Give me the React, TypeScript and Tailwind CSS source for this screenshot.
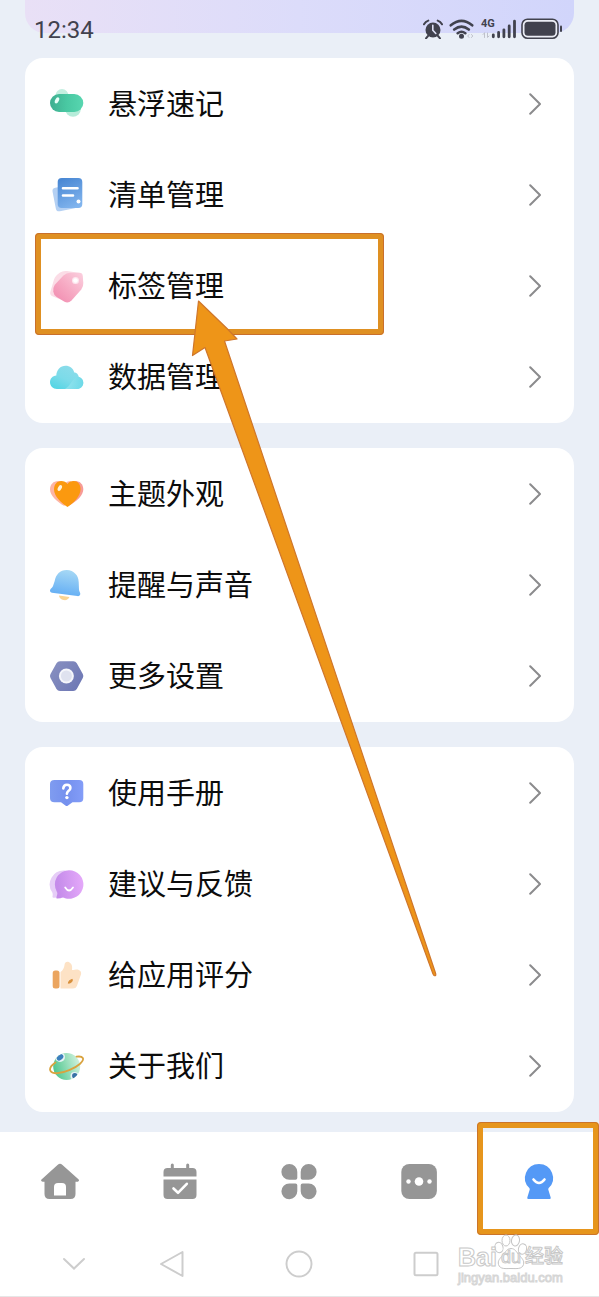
import type { ReactNode } from "react";

const FloatIcon = () => (
  <svg viewBox="0 0 36 36" className="size-9" aria-hidden="true">
    <defs>
      <linearGradient id="float" x1="0" y1="0" x2="1" y2="0">
        <stop offset="0" stopColor="#3fae90" />
        <stop offset="0.5" stopColor="#49c8a2" />
        <stop offset="1" stopColor="#58d6b0" />
      </linearGradient>
    </defs>
    <circle cx="14" cy="9.500" r="6.500" fill="#c4efe0" />
    <circle cx="25" cy="23" r="7.800" fill="#b5ecd9" />
    <rect x="2" y="8" width="33.300" height="18" rx="9" fill="url(#float)" />
    <ellipse cx="9" cy="14.300" rx="1.800" ry="3.300" fill="#e9fff8" transform="rotate(28 9 14.300)" />
  </svg>
);

const ListIcon = () => (
  <svg viewBox="0 0 36 36" className="size-9" aria-hidden="true">
    <defs>
      <linearGradient id="list" x1="0.3" y1="0" x2="0.7" y2="1">
        <stop offset="0" stopColor="#4a88d4" />
        <stop offset="1" stopColor="#82b5ee" />
      </linearGradient>
    </defs>
    <rect x="6" y="9" width="22" height="24" rx="3.500" fill="#b4d0f3" transform="rotate(-11 17 21)" />
    <rect x="9.700" y="1" width="24.600" height="30" rx="4" fill="url(#list)" />
    <path d="M15 11.300h14.500M15 18.500h10" stroke="#fff" strokeWidth="2.600" strokeLinecap="round" />
    <circle cx="30.500" cy="24.500" r="2" fill="#fff" />
  </svg>
);

const TagIcon = () => (
  <svg viewBox="0 0 36 36" className="size-9" aria-hidden="true">
    <defs>
      <linearGradient id="tag" x1="1" y1="0" x2="0.1" y2="0.9">
        <stop offset="0" stopColor="#fbd0df" />
        <stop offset="0.6" stopColor="#f6a8c2" />
        <stop offset="1" stopColor="#f28fb2" />
      </linearGradient>
    </defs>
    <path d="M12 4.500Q15 2.500 19 3L32 5 14 32 5 28.500Q1.500 27 2.300 24L6 11.500Q7 8 12 4.500Z" fill="#fbdce6" />
    <path d="M22 4.700H31.500Q34.500 4.700 34.800 8L35.300 15Q35.500 18.500 33.300 21.500L23.500 32.500Q20.500 35.500 16.500 33.800L8.700 29Q5.600 27 5.300 23.500 5 19.500 6.800 16.800L15.500 7.500Q18.500 4.700 22 4.700Z" fill="url(#tag)" />
    <circle cx="27.500" cy="12.500" r="3.500" fill="#fde6ee" />
    <circle cx="27.500" cy="12.500" r="2.300" fill="#fff" />
  </svg>
);

const CloudIcon = () => (
  <svg viewBox="0 0 36 36" className="size-9" aria-hidden="true">
    <defs>
      <linearGradient id="cloud" x1="0" y1="1" x2="0.7" y2="0">
        <stop offset="0" stopColor="#4cd4e3" />
        <stop offset="0.5" stopColor="#7cdbe9" />
        <stop offset="1" stopColor="#8cdcea" />
      </linearGradient>
      <linearGradient id="cloudLow" x1="0" y1="0.5" x2="1" y2="0.5">
        <stop offset="0" stopColor="#a9e9f2" />
        <stop offset="1" stopColor="#62d8e6" />
      </linearGradient>
    </defs>
    <path d="M9 30C5 30 2 27 2 23.300 2 19.700 4.500 17 8.300 16.600 8.500 10.800 12.500 6.700 17.500 6.700c4.300 0 7.600 2.400 8.800 6.700 2.300 0 4.200 2 4.400 4.400 2.900.8 4.600 3.200 4.600 5.900 0 3.600-2.800 6.300-6.600 6.300Z" fill="url(#cloud)" />
    <path d="M17 30C23 27 24 19 30.700 17.800c2.900.8 4.600 3.200 4.600 5.900 0 3.600-2.800 6.300-6.600 6.300Z" fill="url(#cloudLow)" opacity=".65" />
  </svg>
);

const HeartIcon = () => (
  <svg viewBox="0 0 36 36" className="size-9" aria-hidden="true">
    <path d="M16.500 30C9 26 2 19.500 2 13.500 2 8.500 5.500 5 10 5c3 0 5.500 1.300 7 3 1-1.700 3-3 6-3Z" fill="#fdb5a5" />
    <path d="M20 30C29 25.500 35.300 19 35.300 13.500 35.300 8.500 32 5 27.500 5c-3 0-5.500 1.300-7 3Z" fill="#f79b97" />
    <path d="M19.500 31C14 27.500 6 20.500 6 13.500 6 8.500 9 5 13.200 5c2.700 0 5.200 1.200 6.300 3 1.100-1.800 3.500-3 6.200-3 4 0 6.900 3.400 6.900 8 0 7.500-7.600 14.300-13.100 18Z" fill="#fb990f" />
    <ellipse cx="11.800" cy="12" rx="1.800" ry="3.200" fill="#fff3dc" transform="rotate(28 11.800 12)" />
  </svg>
);

const BellIcon = () => (
  <svg viewBox="0 0 36 36" className="size-9" aria-hidden="true">
    <defs>
      <linearGradient id="bell" x1="0.6" y1="0" x2="0.400" y2="1">
        <stop offset="0" stopColor="#a6d8f5" />
        <stop offset="1" stopColor="#62adf4" />
      </linearGradient>
    </defs>
    <path d="M11 28.500 21.500 30C20.500 32.500 18 33.500 15.500 33c-2.500-.5-4.200-2-4.500-4.500Z" fill="#f9d493" />
    <path d="M6.700 14C7.800 7.200 12.500 2.700 19 3c6.900.4 11.500 5.300 11.700 12l.3 7.500c.1 1.700 1.200 2.600 1.300 4.300 0 1.700-1.300 2.500-3 2.300L4 25.700c-1.800-.3-2.500-1.700-1.700-3.200.8-1.400 2.500-2.300 2.800-3.800Z" fill="url(#bell)" />
  </svg>
);

const NutIcon = () => (
  <svg viewBox="0 0 36 36" className="size-9" aria-hidden="true">
    <defs>
      <linearGradient id="nut" x1="0" y1="0.200" x2="1" y2="0.900">
        <stop offset="0" stopColor="#878fc0" />
        <stop offset="1" stopColor="#6c76b4" />
      </linearGradient>
    </defs>
    <path d="M12 3.300h13.300q2.300 0 3.500 2l6 10.700q1.100 2 0 4l-6 11q-1.200 2-3.500 2H12q-2.300 0-3.500-2L2.500 20q-1.100-2 0-4l6-10.700q1.200-2 3.500-2Z" fill="url(#nut)" />
    <circle cx="18.400" cy="18" r="7.500" fill="#f5f6fb" />
    <circle cx="18.400" cy="18" r="5.500" fill="#dfe2ef" />
  </svg>
);

const ManualIcon = () => (
  <svg viewBox="0 0 36 36" className="size-9" aria-hidden="true">
    <defs>
      <linearGradient id="manual" x1="0" y1="0" x2="1" y2="0">
        <stop offset="0" stopColor="#7f9cf0" />
        <stop offset="0.5" stopColor="#7590ee" />
        <stop offset="1" stopColor="#839df8" />
      </linearGradient>
    </defs>
    <path d="M6.500 5h24.800q4 0 4 4v14.300q0 4-4 4H24.500L20 30.500q-1.300 1-2.600 0L13 27.300H6.500q-4.500 0-4.500-4V9q0-4 4.500-4Z" fill="url(#manual)" />
    <path d="M15.300 13.400c.2-2.500 1.600-3.700 3.600-3.700 2.100 0 3.500 1.300 3.500 3.200 0 2.900-3.500 2.900-3.500 5.800" fill="none" stroke="#fff" strokeWidth="2.600" strokeLinecap="round" />
    <circle cx="18.900" cy="22.600" r="1.700" fill="#fff" />
  </svg>
);

const FeedbackIcon = () => (
  <svg viewBox="0 0 36 36" className="size-9" aria-hidden="true">
    <defs>
      <linearGradient id="feedback" x1="0.100" y1="0.500" x2="1" y2="0.400">
        <stop offset="0" stopColor="#c58cea" />
        <stop offset="1" stopColor="#e5a9fa" />
      </linearGradient>
    </defs>
    <path d="M17 4.500A14 14 0 0 0 4.300 26.500Q5 28 4.500 30.500q-.2 1.300 1.200 1.200L18 31Z" fill="#e6cdf7" />
    <path d="M21 4.200A14.300 14.300 0 1 1 17 32.200Q15 31 12.500 32.300L9.500 32.500Q8 32.500 8.500 31L9.300 28Q9.500 27 8.700 25.500A14.300 14.300 0 0 1 21 4.200Z" fill="url(#feedback)" />
    <path d="M17.200 21.500Q21 27.500 25 21.500" fill="none" stroke="#fff" strokeWidth="1.800" strokeLinecap="round" />
  </svg>
);

const ThumbIcon = () => (
  <svg viewBox="0 0 36 36" className="size-9" aria-hidden="true">
    <rect x="4.700" y="13.500" width="6.800" height="18" rx="2.500" fill="#eba55f" />
    <path d="M12.500 15Q16 12.500 16.500 8C16.700 5 19 4.200 20.800 5 24 6.500 24.500 9.500 24 13h1.500C27 12 31.500 12 32.700 14.500c.8 1.500.4 3-.3 4.500l-3.500 10q-1 2.500-4 2.500H12.500Z" fill="#fde2c5" />
    <path d="M20.300 26.200q.4-3.400 4-3.800.3 3.400-4 3.800Z" fill="#d98f3a" stroke="#d98f3a" strokeLinejoin="round" />
  </svg>
);

const PlanetIcon = () => (
  <svg viewBox="0 0 36 36" className="size-9" aria-hidden="true">
    <defs>
      <linearGradient id="planet" x1="0" y1="0.600" x2="1" y2="0.300">
        <stop offset="0" stopColor="#4ec68e" />
        <stop offset="1" stopColor="#d3f3df" />
      </linearGradient>
      <clipPath id="globe">
        <circle cx="18.700" cy="18.500" r="13.500" />
      </clipPath>
    </defs>
    <circle cx="18.700" cy="18.500" r="13.500" fill="url(#planet)" />
    <g clipPath="url(#globe)">
      <circle cx="12" cy="9" r="5" fill="#e8f3f5" />
      <ellipse cx="12" cy="9.300" rx="3.700" ry="2.700" fill="#3c80bd" transform="rotate(-40 12 9.300)" />
      <circle cx="26.500" cy="28" r="4" fill="#e8f3f5" />
      <circle cx="26.800" cy="27.800" r="2.700" fill="#3872a6" />
    </g>
    <path d="M7.500 14.500C3 17.500 1.200 21 2.700 23.300c2 3 10 2.500 18.500-1.100S36.500 13.200 34.800 10c-.8-1.400-3-1.800-6.300-1.300" fill="none" stroke="#d9a33f" strokeWidth="1.800" strokeLinecap="round" />
  </svg>
);

type Item = { label: string; icon: () => ReactNode; marked?: boolean };

const groups: Item[][] = [
  [
    { label: "悬浮速记", icon: FloatIcon },
    { label: "清单管理", icon: ListIcon },
    { label: "标签管理", icon: TagIcon, marked: true },
    { label: "数据管理", icon: CloudIcon },
  ],
  [
    { label: "主题外观", icon: HeartIcon },
    { label: "提醒与声音", icon: BellIcon },
    { label: "更多设置", icon: NutIcon },
  ],
  [
    { label: "使用手册", icon: ManualIcon },
    { label: "建议与反馈", icon: FeedbackIcon },
    { label: "给应用评分", icon: ThumbIcon },
    { label: "关于我们", icon: PlanetIcon },
  ],
];

const Row = ({ label, icon: Icon, marked }: Item) => (
  <li className="relative">
    <button type="button" className="flex h-[91px] w-full items-center pr-[33px] pl-[23px] text-left">
      <Icon />
      <span className="ml-6 flex-1 pb-[3px] text-[29px] leading-10 text-[#0c0c0c]">{label}</span>
      <svg viewBox="0 0 12 22" className="h-[22px] w-3" fill="none" stroke="#8b8b8d" strokeWidth="2" strokeLinecap="round" strokeLinejoin="round" aria-hidden="true">
        <path d="M1.200 1.200 11 11 1.200 20.800" />
      </svg>
    </button>
    {marked && (
      <span className="pointer-events-none absolute -top-[7px] left-[10px] h-[102px] w-[349px] rounded-[4px] border-6 border-[#df9022] outline -outline-offset-1 outline-[#c96f2c]" />
    )}
  </li>
);

const StatusBar = () => (
  <header className="relative flex h-[58px] items-start justify-between pt-[17px] pr-9 pl-[34px] text-[#41424e]">
    <div className="absolute inset-x-[25px] top-0 h-[33px] rounded-b-[20px] bg-linear-to-r from-[#e9e0f6] via-[#dcdcfa] to-[#d1d5fb]" />
    <time className="relative font-[Roboto,sans-serif] text-2xl leading-[26px]">12:34</time>
    <div className="relative flex items-center pt-px">
      <svg viewBox="0 0 20 20" className="size-5" fill="none" stroke="currentColor" aria-label="Alarm">
        <circle cx="10" cy="11" r="7.500" fill="currentColor" stroke="none" />
        <path d="M1 5.300Q2.500 2.500 5.300 1.600M19 5.300Q17.500 2.500 14.700 1.600M5 17 3 19.300M15 17l2 2.300" strokeWidth="2" strokeLinecap="round" />
        <path d="M9.800 6.300v5l3 3.200" stroke="#dfe1f6" strokeWidth="1.600" strokeLinecap="round" />
      </svg>
      <svg viewBox="0 0 26 20" className="ml-1.5 h-5 w-[26px]" fill="none" stroke="currentColor" strokeWidth="2.600" strokeLinecap="round" aria-label="Wi-Fi">
        <path d="M1.800 6.300Q12.500-2.500 23.200 6.300M5.200 10.500Q12.500 4.700 19.800 10.500M8.700 14.200Q12.500 11.300 16.300 14.200" />
        <circle cx="12.500" cy="17.300" r="1.200" fill="currentColor" />
        <path d="m20 15.500-1.300 1.500 1.300 1.500M22.500 15.500l1.300 1.500-1.300 1.500" stroke="#bfc1cb" strokeWidth="1" />
      </svg>
      <div className="relative ml-1.5 h-5 w-9">
        <span className="absolute -top-px left-0 font-[Roboto,sans-serif] text-[11px] leading-3 font-bold">4G</span>
        <svg viewBox="0 0 36 20" className="h-5 w-9" fill="none" stroke="currentColor" strokeWidth="2.800" strokeLinecap="round" aria-label="Signal">
          <path d="M12.300 17.800v-2M17.600 17.800v-4.300M22.900 17.800v-7M28.200 17.800V7M33.500 17.800V2.200" />
          <path d="M3.500 14v4.500M2 15.500 3.500 14M6.500 14v4.500L8 17" stroke="#bfc1cb" strokeWidth="1" />
        </svg>
      </div>
      <svg viewBox="0 0 42 22" className="ml-1 h-[22px] w-[42px]" aria-label="Battery">
        <rect x="1" y="1.200" width="36" height="19" rx="5.500" fill="#eceef6" stroke="currentColor" strokeWidth="1.600" />
        <rect x="3.500" y="3.700" width="31" height="14" rx="3.500" fill="currentColor" />
        <path d="M40 8.500v4.500" stroke="currentColor" strokeWidth="2" strokeLinecap="round" />
      </svg>
    </div>
  </header>
);

const tabs = [
  {
    name: "Home",
    art: (
      <>
        <path fill="#969696" d="M17.800 2.700q2.200-2 4.400 0L38.700 17.500q.8 1-.2 1.800-.6.500-1.500.5h-1.500V32q0 5-5 5h-21q-5 0-5-5V19.800H3q-1.300 0-1.800-1-.4-.7.3-1.300Z" />
        <path fill="#fff" d="M18 21h4q4 0 4 4v8.500H14V25q0-4 4-4Z" />
      </>
    ),
  },
  {
    name: "Calendar",
    art: (
      <>
        <path d="M12.300 3v5M27.700 3v5" stroke="#969696" strokeWidth="3" strokeLinecap="round" />
        <path fill="#969696" d="M7.500 6h25q4 0 4 4v4.500h-33V10q0-4 4-4ZM3.500 17.500h33V33q0 4-4 4h-25q-4 0-4-4Z" />
        <path d="m13.500 26.500 4.500 4.300 8.800-9" fill="none" stroke="#fff" strokeWidth="2.600" strokeLinecap="round" strokeLinejoin="round" />
      </>
    ),
  },
  {
    name: "Widgets",
    art: (
      <path fill="#969696" d="M10.300 2A8 8 0 0 1 18.300 10v6q0 1.800-1.800 1.800h-6.200a7.900 7.900 0 0 1 0-15.800ZM29.700 2a7.900 7.900 0 0 1 0 15.800h-6.200q-1.800 0-1.800-1.800v-6a8 8 0 0 1 8-8ZM10.300 37.200a7.900 7.900 0 0 1 0-15.800h6.200q1.800 0 1.800 1.800v6a8 8 0 0 1-8 8ZM29.700 37.200a8 8 0 0 1-8-8v-6q0-1.800 1.800-1.800h6.200a7.900 7.900 0 0 1 0 15.800Z" />
    ),
  },
  {
    name: "More",
    art: (
      <>
        <rect x="2.300" y="2" width="35.600" height="35" rx="8" fill="#969696" />
        <circle cx="20" cy="19.500" r="4.300" fill="#fff" />
        <circle cx="9.500" cy="19.500" r="2.200" fill="#fff" />
        <circle cx="30.500" cy="19.500" r="2.200" fill="#fff" />
      </>
    ),
  },
  {
    name: "Me",
    art: (
      <>
        <path fill="#5499f6" d="M20 2a14 14 0 0 1 9.700 24.100q-.8.900-.3 2l2.300 7.400q.4 1.500-1.200 1.500h-21q-1.600 0-1.200-1.500l2.300-7.400q.5-1.100-.3-2A14 14 0 0 1 20 2Z" />
        <path d="M14.500 17.500q5.500 7 11 0" fill="none" stroke="#fff" strokeWidth="2.600" strokeLinecap="round" />
      </>
    ),
  },
];

const TabBar = () => (
  <nav className="grid h-[100px] grid-cols-5 bg-white">
    {tabs.map((tab, i) => (
      <div key={tab.name} className="relative flex">
        <button type="button" aria-label={tab.name} className="flex flex-1 items-center justify-center">
          <svg viewBox="0 0 40 40" className="size-10" aria-hidden="true">{tab.art}</svg>
        </button>
        {i === 4 && (
          <span className="pointer-events-none absolute -top-[10px] right-0 -left-[2px] h-[113px] rounded-[4px] border-6 border-[#e6951c] outline -outline-offset-1 outline-[#cb742b]" />
        )}
      </div>
    ))}
  </nav>
);

const SystemBar = () => (
  <nav className="grid h-[65px] grid-cols-[68px_1fr_1fr_1fr] items-center border-b border-[#e6e6e6] bg-white pr-[109px] pl-10">
    <button type="button" aria-label="Hide" className="flex justify-center">
      <svg viewBox="0 0 26 28" className="h-7 w-[26px]" fill="none" stroke="#cdcdcd" strokeWidth="2" strokeLinecap="round"><path d="m3 9 10 9.500L23 9" /></svg>
    </button>
    <button type="button" aria-label="Back" className="flex justify-center">
      <svg viewBox="0 0 28 28" className="size-7" fill="none" stroke="#cdcdcd" strokeWidth="2" strokeLinejoin="round"><path d="M24.500 2v24L3 14Z" /></svg>
    </button>
    <button type="button" aria-label="Home screen" className="flex justify-center">
      <svg viewBox="0 0 28 28" className="size-7" fill="none" stroke="#cdcdcd" strokeWidth="2"><circle cx="14" cy="14" r="12.500" /></svg>
    </button>
    <button type="button" aria-label="Recent apps" className="flex justify-center">
      <svg viewBox="0 0 28 28" className="size-7" fill="none" stroke="#cdcdcd" strokeWidth="2"><rect x="2.500" y="2.800" width="23" height="22.500" rx="1.500" /></svg>
    </button>
  </nav>
);

const Watermark = () => (
  <div className="pointer-events-none absolute right-[31px] bottom-3 flex w-[110px] flex-col text-white">
    <svg viewBox="0 0 34 36" className="absolute -top-[9px] left-9 h-9 w-[34px]" fill="#fff" stroke="#c4c4c4" aria-hidden="true">
      <ellipse cx="5" cy="13.500" rx="4" ry="5.200" transform="rotate(-15 5 13.500)" />
      <ellipse cx="12" cy="6.500" rx="4" ry="5.500" />
      <ellipse cx="21.500" cy="6.500" rx="4" ry="5.500" transform="rotate(10 21.500 6.500)" />
      <ellipse cx="28.500" cy="15" rx="4" ry="5.200" transform="rotate(15 28.500 15)" />
      <path d="M17 14.500c4 0 5.500 3.500 8 6.500 3 3.500 5.500 5.500 4.500 9.500-1.500 5-7 4-12.500 4s-11 1-12.500-4C3.500 26.500 6 24.500 9 21c2.500-3 4-6.500 8-6.500Z" />
    </svg>
    <div className="relative flex items-center font-['Liberation_Sans','Noto_Sans_CJK_SC',sans-serif] leading-7 font-bold [-webkit-text-stroke:1px_#c8c8c8]">
      <span className="w-[39px] text-[25px]">Bai</span>
      <span className="w-7 text-center text-lg font-normal">du</span>
      <span className="text-[19px] font-medium">经验</span>
    </div>
    <span className="font-['Liberation_Sans',sans-serif] text-[13px] leading-[14px] [-webkit-text-stroke:1px_#d6d6d6]">jingyan.baidu.com</span>
  </div>
);

const Arrow = () => (
  <svg viewBox="0 0 250 680" className="pointer-events-none absolute top-[299px] left-[190px] h-[680px] w-[250px]" aria-hidden="true">
    <path d="M8.500 2 37 29.500 47 40 34.500 42 245.500 674Q246.500 677.500 244 676.500L243 675 15 48.500 2.500 56.500Z" fill="#ee9518" stroke="#cf762b" strokeWidth="1.200" strokeLinejoin="round" />
  </svg>
);

export default function App() {
  return (
    <div className="relative flex min-h-screen flex-col bg-[#eaeff7] font-['Noto_Sans_CJK_SC',sans-serif]">
      <StatusBar />
      <main className="flex flex-1 flex-col gap-[25px] px-[25px] pb-[18px]">
        {groups.map((items) => (
          <ul key={items[0].label} className="rounded-[18px] bg-white pb-px">
            {items.map((item) => (
              <Row key={item.label} {...item} />
            ))}
          </ul>
        ))}
      </main>
      <TabBar />
      <SystemBar />
      <Watermark />
      <Arrow />
    </div>
  );
}
